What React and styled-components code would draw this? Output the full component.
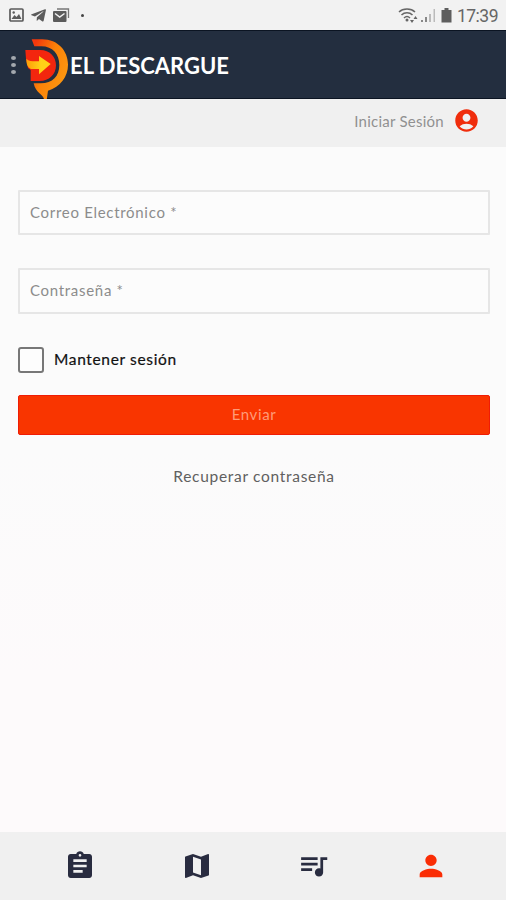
import styled, { createGlobalStyle } from "styled-components";
import {
  MdAccountCircle,
  MdAssignment,
  MdMap,
  MdPerson,
  MdQueueMusic,
} from "react-icons/md";
import { FaTelegramPlane } from "react-icons/fa";

const BrandMark = () => (
  <BrandSvg width="46" height="62" viewBox="72 114 138 186">
    <defs>
      <linearGradient id="ring" x1="0" y1="0" x2="1" y2="0.7">
        <stop offset="0.1" stopColor="#f4380c" />
        <stop offset="0.5" stopColor="#fb8208" />
        <stop offset="1" stopColor="#fb9a12" />
      </linearGradient>
      <linearGradient id="arrow" x1="0" y1="0" x2="1" y2="0">
        <stop offset="0" stopColor="#ff9d08" />
        <stop offset="0.6" stopColor="#ffd117" />
      </linearGradient>
    </defs>
    <path
      d="M95 118H126C174 118 204 153 204 194C204 230 181 260 144 272L140 300L132 298C130 284 106 278 101 250H122C158 250 178 228 178 195C178 163 158 139 124 139H103Z"
      fill="url(#ring)"
    />
    <path
      d="M76 150H121C149 150 168 170 168 196C168 224 147 243 119 243H92V210L84 204L78 176Z"
      fill="#f3260e"
    />
    <path d="M79 176C88 185 98 184 117 184V168L152 192L117 223V207H91V205C83 202 79 192 79 176Z" fill="url(#arrow)" />
  </BrandSvg>
);

const StatusLeft = () => (
  <StatusGroup $gap="6px">
    <svg width="15" height="14" viewBox="0 0 15 14">
      <rect x="1" y="1" width="13" height="12" rx="1" fill="none" stroke="#5b5b5b" strokeWidth="1.7" />
      <path d="M2.5 11L5.5 7L7.5 9L10 6L12.5 11Z" fill="#5b5b5b" />
      <circle cx="4.7" cy="4.5" r="1.2" fill="#5b5b5b" />
    </svg>
    <FaTelegramPlane size={17} />
    <svg width="18" height="15" viewBox="0 0 18 15">
      <path d="M4 1H15.5V10" fill="none" stroke="#777" strokeWidth="1.3" />
      <rect x="0" y="3" width="13.5" height="11" rx="1" fill="#5b5b5b" />
      <path d="M2 5.5L6.7 9L11.5 5.5" fill="none" stroke="#f1f1f1" strokeWidth="1.5" />
    </svg>
    <Dot />
  </StatusGroup>
);

const StatusRight = () => (
  <StatusGroup $gap="5px">
    <svg width="20" height="17" viewBox="0 0 20 17">
      <g fill="none" stroke="#666" strokeWidth="1.5">
        <path d="M1 5C5 1 13 1 17 5" />
        <path d="M3.5 8C6.5 5 11.5 5 14.5 8" />
        <path d="M6 11C8 9 10 9 12 11" />
      </g>
      <circle cx="9" cy="13" r="1.5" fill="#666" />
      <path d="M12 13H16L14 16ZM15.5 12L17.5 9L19.5 12Z" fill="#666" />
    </svg>
    <SignalBars width="15" height="15" viewBox="0 0 15 15">
      <path d="M0 12H2V14H0ZM4 9H6V14H4Z" fill="#888" />
      <path d="M8 6H10V14H8ZM12.5 1H14V14H12.5Z" fill="#bbb" />
    </SignalBars>
    <svg width="11" height="15" viewBox="0 0 11 15">
      <path d="M3.5 0H7.5V2H10.5V14.5H0.5V2H3.5Z" fill="#5e5e5e" />
    </svg>
    <Clock>17:39</Clock>
  </StatusGroup>
);

export default function App() {
  return (
    <>
      <GlobalStyle />
      <Screen>
        <StatusBar>
          <StatusLeft />
          <StatusRight />
        </StatusBar>

        <Header>
          <MenuDots>
            <i />
            <i />
            <i />
          </MenuDots>
          <BrandMark />
          <BrandName>EL DESCARGUE</BrandName>
        </Header>

        <SessionBar>
          <span>Iniciar Sesión</span>
          <MdAccountCircle size={27} color="#f02d0c" />
        </SessionBar>

        <Form>
          <Input placeholder="Correo Electrónico *" />
          <Input placeholder="Contraseña *" type="password" $tall />
          <KeepSession>
            <Checkbox type="checkbox" />
            <span>Mantener sesión</span>
          </KeepSession>
          <SubmitButton type="button">Enviar</SubmitButton>
          <RecoverLink>Recuperar contraseña</RecoverLink>
        </Form>

        <BottomNav>
          <NavItem>
            <MdAssignment size={32} />
          </NavItem>
          <NavItem>
            <MdMap size={32} />
          </NavItem>
          <NavItem>
            <MdQueueMusic size={33} />
          </NavItem>
          <NavItem $active>
            <MdPerson size={34} />
          </NavItem>
        </BottomNav>
      </Screen>
    </>
  );
}

const GlobalStyle = createGlobalStyle`
  * {
    box-sizing: border-box;
  }

  body {
    margin: 0;
    font-family: Lato, "Liberation Sans", sans-serif;
  }

  svg {
    display: block;
    flex-shrink: 0;
  }
`

const Screen = styled.div`
  display: flex;
  flex-direction: column;
  height: 900px;
  background: linear-gradient(#fbfbfb 50%, #fdfafb 75%);
`

const StatusBar = styled.div`
  display: flex;
  justify-content: space-between;
  align-items: center;
  height: 30px;
  padding: 0 8px 0 9px;
  background-color: #f2f2f2;
`

const StatusGroup = styled.div`
  display: flex;
  align-items: center;
  gap: ${props => props.$gap};
  color: #5b5b5b;
`

const SignalBars = styled.svg`
  margin-left: -2px;
`

const Dot = styled.span`
  width: 3px;
  height: 3px;
  margin-left: 4px;
  border-radius: 50%;
  background-color: #444;
`

const Clock = styled.span`
  font-family: Roboto, sans-serif;
  font-size: 17.5px;
  line-height: 30px;
  letter-spacing: -0.5px;
  margin: 2px 0 0;
  color: #666;
`

const Header = styled.header`
  display: flex;
  align-items: center;
  height: 69px;
  padding-left: 11px;
  background-color: #232e3f;
  border-top: 1px solid #0b1422;
  border-bottom: 1px solid #0b1422;
`

const MenuDots = styled.div`
  display: flex;
  flex-direction: column;
  gap: 3px;
  margin-right: 8px;

  i {
    width: 5px;
    height: 4px;
    border-radius: 50%;
    background-color: #a3a8ae;
  }
`

const BrandSvg = styled.svg`
  margin-top: 9px;
`

const BrandName = styled.span`
  margin: 1px 0 0 0;
  color: #fff;
  font-size: 22px;
  font-weight: 700;
  letter-spacing: 0;
  white-space: nowrap;
`

const SessionBar = styled.div`
  display: flex;
  justify-content: flex-end;
  align-items: center;
  gap: 9px;
  height: 48px;
  padding: 0 26px 5px 0;
  background-color: #f0f0f0;
  color: #909090;
  font-size: 15px;
  letter-spacing: 0.25px;
`

const Form = styled.form`
  display: flex;
  flex-direction: column;
  flex: 1;
  padding: 43px 16px 0 18px;
`

const Input = styled.input`
  width: 100%;
  height: ${props => props.$tall ? '46px' : '45px'};
  margin-bottom: 33px;
  padding: 0 10px 2px;
  border: 2px solid #e6e6e6;
  border-radius: 1px;
  background-color: #fcfcfc;
  font-family: inherit;
  font-size: 15px;
  letter-spacing: 0.7px;

  &::placeholder {
    color: #8c8c8c;
    opacity: 1;
  }
`

const KeepSession = styled.label`
  display: flex;
  align-items: center;
  height: 26px;
  color: #111;
  font-size: 15.5px;
  font-weight: 400;
  letter-spacing: 0.65px;

  span {
    margin-bottom: 2px;
    -webkit-text-stroke: 0.2px #111;
  }
`

const Checkbox = styled.input`
  appearance: none;
  width: 26px;
  height: 26px;
  margin: 0 10px 0 0;
  border: 2px solid #777;
  border-radius: 3px;
  background-color: #fdfdfd;
`

const SubmitButton = styled.button`
  height: 40px;
  margin-top: 22px;
  padding: 0 0 2px;
  border: 1px solid #f01c05;
  border-radius: 2px;
  background-color: #f93500;
  color: #ff9b78;
  font-family: inherit;
  font-size: 15px;
  letter-spacing: 0.6px;
`

const RecoverLink = styled.a`
  margin-top: 32px;
  color: #606060;
  font-size: 15.5px;
  letter-spacing: 0.7px;
  text-align: center;
`

const BottomNav = styled.nav`
  display: flex;
  height: 68px;
  padding: 0 17px 1px 21px;
  background-color: #f0f0f0;
`

const NavItem = styled.a`
  display: flex;
  flex: 1;
  justify-content: center;
  align-items: center;
  color: ${props => props.$active ? '#fa2d05' : '#292c40'};
`
